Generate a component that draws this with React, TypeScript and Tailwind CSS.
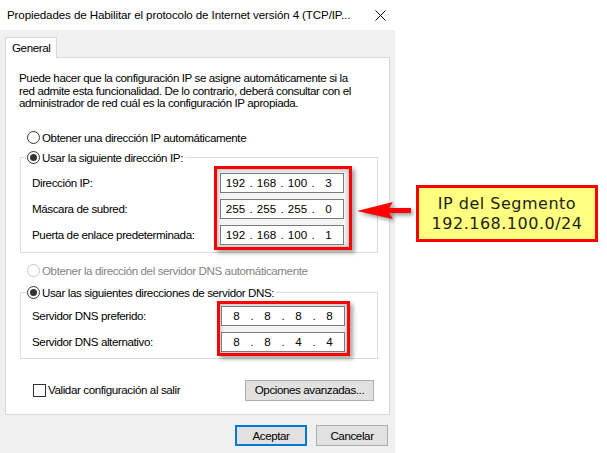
import React from "react";

function Radio({ checked = false, disabled = false }: { checked?: boolean; disabled?: boolean }) {
  return (
    <span
      className={`flex h-[13px] w-[13px] shrink-0 items-center justify-center rounded-full border bg-white ${
        disabled ? "border-[#c4c4c4]" : "border-[#333333]"
      }`}
    >
      {checked && <span className="h-[7px] w-[7px] rounded-full bg-[#333333]" />}
    </span>
  );
}

function IpBox({ parts }: { parts: string[] }) {
  return (
    <div className="flex h-[20px] w-[124px] items-center border border-[#7a7a7a] bg-white pl-[1px] tracking-normal">
      {parts.map((p, i) => (
        <React.Fragment key={i}>
          <span className="w-[27px] text-center">{p}</span>
          {i < 3 && <span className="w-[4px] text-center">.</span>}
        </React.Fragment>
      ))}
    </div>
  );
}

function Highlight({ className, children }: { className: string; children: React.ReactNode }) {
  return (
    <div
      className={`flex flex-col gap-[6px] border-[3px] border-[#ff0000] bg-[#f4f4f4] shadow-[3px_3px_4px_rgba(0,0,0,0.35),inset_0_0_5px_rgba(0,0,0,0.35)] ${className}`}
    >
      {children}
    </div>
  );
}

function Group({ legend, children }: { legend: string; children: React.ReactNode }) {
  return (
    <fieldset className="ml-[14px] mr-[11px] border border-[#dcdcdc] pl-[11px] pr-[2px] pt-[1px] pb-[2px]">
      <legend className="-ml-[5px] flex h-[14px] items-center gap-[2px] pr-[2px]">
        <Radio checked />
        <span>{legend}</span>
      </legend>
      {children}
    </fieldset>
  );
}

export default function App() {
  return (
    <div className="relative h-[453px] w-[607px] overflow-hidden whitespace-nowrap bg-white font-['Liberation_Sans',Arial,sans-serif] text-[11.6px] leading-[14px] tracking-[-0.4px] text-black">
      {/* title bar */}
      <div className="flex h-[30px] w-[395px] items-center justify-between pl-[7px] pr-[8px] tracking-[-0.12px]">
        <span>Propiedades de Habilitar el protocolo de Internet versión 4 (TCP/IP...</span>
        <svg width="11" height="11" viewBox="0 0 11 11" className="mr-[1px]">
          <path d="M0.5 0.5 L10.5 10.5 M10.5 0.5 L0.5 10.5" stroke="#000" strokeWidth="1" />
        </svg>
      </div>

      <div className="flex">
        {/* dialog body */}
        <div className="h-[423px] w-[395px] shrink-0 bg-[#f0f0f0] px-[5px] pt-[7px]">
          <div className="relative z-10 -mb-[1px] flex h-[21px] w-[52px] items-center border border-b-0 border-[#d9d9d9] bg-white pl-[6px]">
            General
          </div>
          <div className="flex h-[358px] flex-col border border-[#d9d9d9] bg-white">
            <p className="pl-[13px] pt-[14px] leading-[12.5px]">
              Puede hacer que la configuración IP se asigne automáticamente si la
              <br />
              red admite esta funcionalidad. De lo contrario, deberá consultar con el
              <br />
              administrador de red cuál es la configuración IP apropiada.
            </p>

            <label className="ml-[21px] mt-[21px] flex h-[14px] items-center gap-[2px]">
              <Radio />
              <span>Obtener una dirección IP automáticamente</span>
            </label>

            <div className="mt-[6px]">
              <Group legend="Usar la siguiente dirección IP:">
                <div className="flex items-start">
                  <div className="mt-[7px] flex w-[182px] flex-col gap-[6px]">
                    <span className="leading-[20px]">Dirección IP:</span>
                    <span className="leading-[20px]">Máscara de subred:</span>
                    <span className="leading-[20px]">Puerta de enlace predeterminada:</span>
                  </div>
                  <Highlight className="h-[84px] w-[138px] px-[3px] pt-[4px]">
                    <IpBox parts={["192", "168", "100", "3"]} />
                    <IpBox parts={["255", "255", "255", "0"]} />
                    <IpBox parts={["192", "168", "100", "1"]} />
                  </Highlight>
                </div>
              </Group>
            </div>

            <label className="ml-[21px] mt-[11px] flex h-[14px] items-center gap-[2px] text-[#838383]">
              <Radio disabled />
              <span>Obtener la dirección del servidor DNS automáticamente</span>
            </label>

            <div className="mt-[8px]">
              <Group legend="Usar las siguientes direcciones de servidor DNS:">
                <div className="flex items-start">
                  <div className="mt-[5px] flex w-[185px] flex-col gap-[6px]">
                    <span className="leading-[20px]">Servidor DNS preferido:</span>
                    <span className="leading-[20px]">Servidor DNS alternativo:</span>
                  </div>
                  <Highlight className="h-[55px] w-[133px] px-[1px] pt-[2px]">
                    <IpBox parts={["8", "8", "8", "8"]} />
                    <IpBox parts={["8", "8", "4", "4"]} />
                  </Highlight>
                </div>
              </Group>
            </div>

            <div className="ml-[27px] mr-[15px] mt-[21px] flex items-center justify-between">
              <label className="flex items-center gap-[2px]">
                <span className="h-[13px] w-[13px] border border-[#333333] bg-white" />
                <span>Validar configuración al salir</span>
              </label>
              <button className="h-[21px] w-[129px] border border-[#adadad] bg-[#e1e1e1]">
                Opciones avanzadas...
              </button>
            </div>
          </div>

          <div className="mt-[10px] flex justify-end gap-[9px] pr-[2px]">
            <button className="h-[21px] w-[72px] border-2 border-[#0078d7] bg-[#e1e1e1]">Aceptar</button>
            <button className="h-[21px] w-[72px] border border-[#adadad] bg-[#e1e1e1]">Cancelar</button>
          </div>
        </div>

        {/* annotation */}
        <div className="ml-[21px] mt-[155px] flex h-[57px] w-[182px] flex-col items-center justify-center border-[3px] border-[#ff0000] bg-[#ffff80] font-['DejaVu_Sans',sans-serif] text-[16px] leading-[20px] tracking-[0.5px] text-[#222]">
          <span>IP del Segmento</span>
          <span>192.168.100.0/24</span>
        </div>
      </div>

      <svg
        className="absolute left-[354px] top-[198px] drop-shadow-[2px_2px_2px_rgba(0,0,0,0.45)]"
        width="62"
        height="26"
        viewBox="354 198 62 26"
      >
        <polygon points="357,211 393,202 389,208 411,208 411,213 389,213 393,219" fill="#ff0000" />
      </svg>
    </div>
  );
}
